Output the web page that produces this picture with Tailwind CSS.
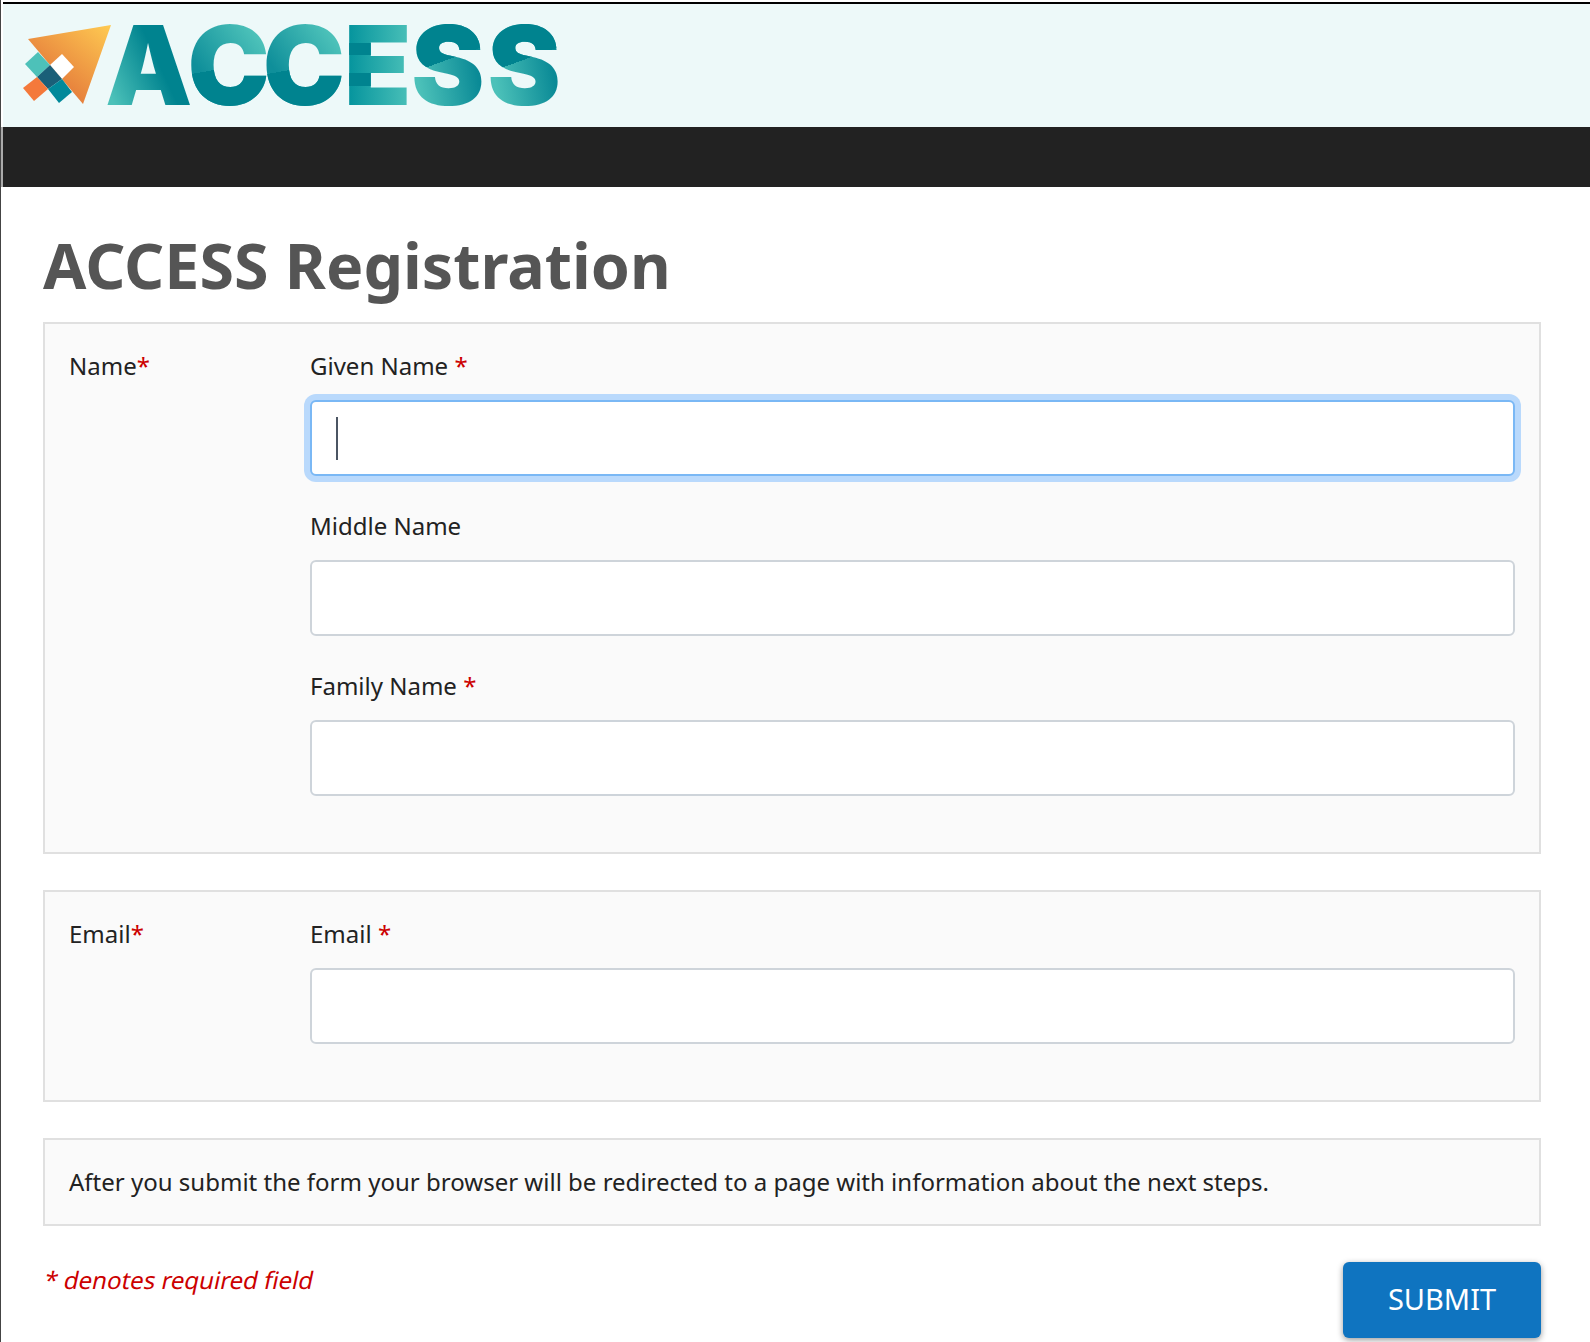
<!DOCTYPE html>
<html lang="en">
<head>
  <meta charset="UTF-8" />
  <meta name="viewport" content="width=device-width, initial-scale=1.0" />
  <title>ACCESS Registration</title>
  <script src="https://cdn.jsdelivr.net/npm/@tailwindcss/browser@4"></script>
</head>
<body class="h-[1342px] overflow-hidden bg-white font-['Noto_Sans',sans-serif] text-[24px] text-[#222]">
  <div class="h-full border-l border-l-[#444] pt-[2px]">
    <!-- logo bar -->
    <header class="ml-[2px] flex h-[125px] border-t-2 border-t-black bg-[#edf9f9] pl-[18px]">
      <svg class="mt-[19px] h-[84px] w-[92px] shrink-0" viewBox="21 23 92 84">
        <defs>
          <linearGradient id="dart" x1="1" y1="0" x2="0.35" y2="0.75">
            <stop offset="0" stop-color="#ffcb52" />
            <stop offset="1" stop-color="#e67f3c" />
          </linearGradient>
        </defs>
        <polygon points="111,25 28,39 83,104" fill="url(#dart)" />
        <polygon points="38,52 50,65 37,77 25,64" fill="#4dc1b9" />
        <polygon points="62,54 74,67 62,79 50,65" fill="#fff" />
        <polygon points="50,65 62,79 48,89 37,77" fill="#1a5f78" />
        <polygon points="37,77 48,89 34,101 23,88" fill="#f4793b" />
        <polygon points="62,79 72,92 59,103 48,89" fill="#00899a" />
      </svg>
      <div class="mt-[6px] ml-[-8px] flex h-[110px] font-['Inter',sans-serif] text-[110px] leading-[110px] font-black">
        <span class="bg-[linear-gradient(65deg,#4cc1b9_12%,#00838f_58%)] bg-clip-text text-transparent">A</span>
        <span class="-ml-[5px] bg-[linear-gradient(170deg,transparent_52%,#00838f_52%),linear-gradient(to_top_right,#0f8f9a_30%,#4cc1b9_80%)] bg-clip-text text-transparent">C</span>
        <span class="-ml-[7px] bg-[linear-gradient(170deg,transparent_52%,#00838f_52%),linear-gradient(to_top_right,#0f8f9a_30%,#4cc1b9_80%)] bg-clip-text text-transparent">C</span>
        <span class="-ml-[1px] bg-[linear-gradient(to_bottom,transparent_33px,#00838f_33px,#00838f_45px,transparent_45px,transparent_63px,#00838f_63px,#00838f_76px,transparent_76px),linear-gradient(to_right,#00919b,#4cc1b9)] bg-clip-text text-transparent">E</span>
        <span class="bg-[linear-gradient(160deg,#00838f_46%,transparent_46%),linear-gradient(80deg,#4cc1b9_15%,#0a8a96_80%)] bg-clip-text text-transparent">S</span>
        <span class="ml-[3px] bg-[linear-gradient(160deg,#00838f_46%,transparent_46%),linear-gradient(80deg,#4cc1b9_15%,#0a8a96_80%)] bg-clip-text text-transparent">S</span>
      </div>
    </header>
    <div class="h-[60px] border-l-2 border-l-[#aaa] bg-[#222]"></div>

    <main class="pr-[49px] pl-[42px]">
      <h1 class="mt-[40px] h-[95px] text-[62.7px] leading-[76px] font-bold text-[#555]">ACCESS Registration</h1>

      <section class="grid h-[532px] grid-cols-[241px_1fr] border-2 border-[#e0e0e0] bg-[#fafafa] pt-[23px] pr-[24px] pl-[24px]">
        <div class="leading-[38px]">Name<span class="text-[#c00]">*</span></div>
        <div class="flex flex-col">
          <label class="h-[38px] leading-[38px]">Given Name <span class="text-[#c00]">*</span></label>
          <div class="mt-[15px] flex h-[76px] items-center rounded-[6px] border-2 border-[#7ab8f5] bg-white pl-[24px] ring-[6px] ring-[#b9d9fc]">
            <div class="h-[43px] w-[2px] bg-[#4b5563]"></div>
          </div>
          <label class="mt-[31px] h-[38px] leading-[38px]">Middle Name</label>
          <div class="mt-[15px] h-[76px] rounded-[6px] border-2 border-[#ced4da] bg-white"></div>
          <label class="mt-[31px] h-[38px] leading-[38px]">Family Name <span class="text-[#c00]">*</span></label>
          <div class="mt-[15px] h-[76px] rounded-[6px] border-2 border-[#ced4da] bg-white"></div>
        </div>
      </section>

      <section class="mt-[36px] grid h-[212px] grid-cols-[241px_1fr] border-2 border-[#e0e0e0] bg-[#fafafa] pt-[23px] pr-[24px] pl-[24px]">
        <div class="leading-[38px]">Email<span class="text-[#c00]">*</span></div>
        <div class="flex flex-col">
          <label class="h-[38px] leading-[38px]">Email <span class="text-[#c00]">*</span></label>
          <div class="mt-[15px] h-[76px] rounded-[6px] border-2 border-[#ced4da] bg-white"></div>
        </div>
      </section>

      <section class="mt-[36px] flex h-[88px] items-center border-2 border-[#e0e0e0] bg-[#fafafa] pl-[24px] text-[24.02px]">
        After you submit the form your browser will be redirected to a page with information about the next steps.
      </section>

      <div class="mt-[36px] flex items-start justify-between">
        <p class="inline-block -skew-x-[12deg] pl-[2px] leading-[36px] text-[#c00]">* denotes required field</p>
        <button class="h-[76px] w-[198px] rounded-[6px] bg-[#0f74c0] pb-[2px] text-[29px] text-white shadow-[0_2px_6px_rgba(0,0,0,0.4)]">SUBMIT</button>
      </div>
    </main>
  </div>
</body>
</html>
